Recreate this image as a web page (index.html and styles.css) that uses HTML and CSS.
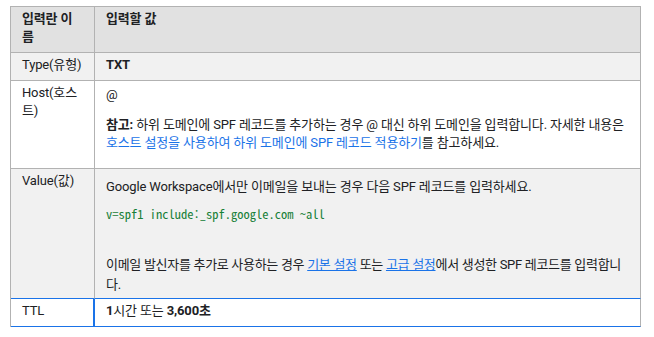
FILE: index.html
```html
<!DOCTYPE html>
<html lang="ko">
<head>
<meta charset="utf-8">
<link rel="stylesheet" href="styles.css">
</head>
<body>
<table class="dns-table">
  <colgroup>
    <col class="col-name">
    <col class="col-value">
  </colgroup>
  <thead>
    <tr class="row-head">
      <th>입력란 이름</th>
      <th>입력할 값</th>
    </tr>
  </thead>
  <tbody>
    <tr class="row-shade">
      <td>Type(유형)</td>
      <td><strong>TXT</strong></td>
    </tr>
    <tr class="row-plain">
      <td>Host(호스트)</td>
      <td class="cell-host">
        <p class="first">@</p>
        <p><strong>참고:</strong> 하위 도메인에 SPF 레코드를 추가하는 경우 @ 대신 하위 도메인을 입력합니다. 자세한 내용은 <a class="link" href="#">호스트 설정을 사용하여 하위 도메인에 SPF 레코드 적용하기</a>를 참고하세요.</p>
      </td>
    </tr>
    <tr class="row-shade row-before-focus">
      <td>Value(값)</td>
      <td class="cell-value">
        <p class="first-v">Google Workspace에서만 이메일을 보내는 경우 다음 SPF 레코드를 입력하세요.</p>
        <p class="code">v=spf1 include:_spf.google.com ~all</p>
        <p class="last">이메일 발신자를 추가로 사용하는 경우 <a class="link ul" href="#">기본 설정</a> 또는 <a class="link ul" href="#">고급 설정</a>에서 생성한 SPF 레코드를 입력합니다.</p>
      </td>
    </tr>
    <tr class="row-plain row-focus">
      <td>TTL</td>
      <td><strong>1</strong>시간 또는 <strong>3,600초</strong></td>
    </tr>
  </tbody>
</table>
</body>
</html>
```

FILE: styles.css
```css
html, body {
  margin: 0;
  background: #ffffff;
}
body {
  padding: 6px 0 0 10px;
  font-family: Roboto, "Noto Sans CJK KR", sans-serif;
  font-size: 13px;
  line-height: 18px;
  letter-spacing: -0.15px;
  color: #202124;
}
.dns-table {
  width: 631px;
  table-layout: fixed;
  border-collapse: separate;
  border-spacing: 0;
  border-top: 1px solid #b2b2b2;
  border-left: 1px solid #b2b2b2;
}
.col-name { width: 84px; }
th, td {
  text-align: left;
  vertical-align: top;
  padding: 3px 11px 6px 11px;
  border-right: 1px solid #b2b2b2;
  border-bottom: 1px solid #b2b2b2;
}
th { font-weight: 700; }
.row-head { background: #e1e1e1; }
.row-shade { background: #f1f1f1; }
.row-plain { background: #ffffff; }
strong { font-weight: 700; }
p { margin: 0 0 11px 0; }
p.first { margin-top: 2px; margin-bottom: 12px; }
.cell-host { padding-bottom: 5px; }
p.first-v { margin-top: 6px; margin-bottom: 9px; }
p.code {
  font-family: "Noto Sans Mono CJK KR", "DejaVu Sans Mono", monospace;
  font-size: 12.5px;
  letter-spacing: 0;
  color: #188038;
  margin-bottom: 32px;
}
p.last {
  margin-bottom: 0;
  line-height: 20px;
  letter-spacing: -0.3px;
}
.cell-value { padding-bottom: 3px; }
.link { color: #1a73e8; text-decoration: none; }
.link.ul { text-decoration: underline; }
.row-before-focus td { border-bottom-color: #1a73e8; }
.row-focus td { border-bottom-color: #1a73e8; }
.row-focus td:first-child { border-right: 2px solid #1a73e8; }
```
